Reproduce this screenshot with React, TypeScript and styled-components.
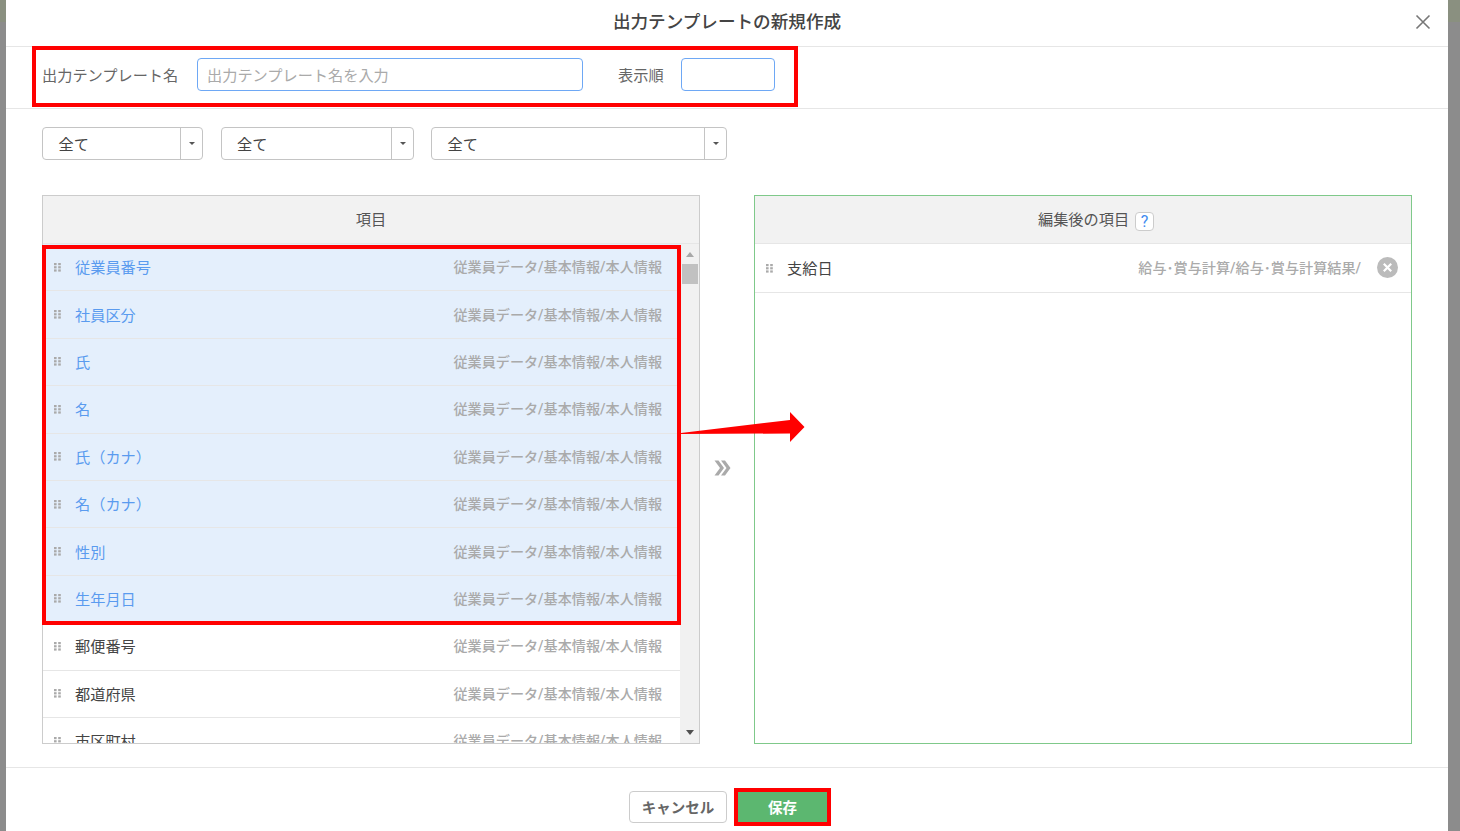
import styled, { createGlobalStyle } from 'styled-components'

const GlobalStyle = createGlobalStyle`
  html, body {
    margin: 0;
    padding: 0;
    height: 100%;
    overflow: hidden;
    font-family: Roboto, "Noto Sans CJK JP", "Noto Sans", sans-serif;
    color: #444;
  }
`

const leftItems = [
  { name: '従業員番号', selected: true },
  { name: '社員区分', selected: true },
  { name: '氏', selected: true },
  { name: '名', selected: true },
  { name: '氏（カナ）', selected: true },
  { name: '名（カナ）', selected: true },
  { name: '性別', selected: true },
  { name: '生年月日', selected: true },
  { name: '郵便番号', selected: false },
  { name: '都道府県', selected: false },
  { name: '市区町村', selected: false },
]

const Handle = () => (
  <HandleIcon width="7" height="9" viewBox="0 0 7 9">
    {[0, 3.2, 6.4].map((y) => (
      <g key={y}>
        <rect x="0" y={y} width="2.6" height="2.2" />
        <rect x="4.2" y={y} width="2.6" height="2.2" />
      </g>
    ))}
  </HandleIcon>
)

const Select = ({ width }: { width: number }) => (
  <SelectBox $width={width}>
    <SelectValue>全て</SelectValue>
    <SelectCaret />
  </SelectBox>
)

export default function App() {
  return (
    <Page>
      <GlobalStyle />
      <Modal>
        <Header>
          <Title>出力テンプレートの新規作成</Title>
          <CloseButton width="16" height="16" viewBox="0 0 16 16">
            <path d="M1.5 1.5 L14.5 14.5 M14.5 1.5 L1.5 14.5" />
          </CloseButton>
        </Header>

        <FormRow>
          <FieldLabel>出力テンプレート名</FieldLabel>
          <NameInput placeholder="出力テンプレート名を入力" />
          <OrderLabel>表示順</OrderLabel>
          <OrderInput />
        </FormRow>

        <Body>
          <Filters>
            <Select width={161} />
            <Select width={193} />
            <Select width={296} />
          </Filters>

          <Columns>
            <LeftPanel>
              <PanelHeader>項目</PanelHeader>
              <PanelBody>
                <List>
                  {leftItems.map((item) => (
                    <Row key={item.name} $selected={item.selected}>
                      <Handle />
                      <RowName $selected={item.selected}>{item.name}</RowName>
                      <RowSource>従業員データ/基本情報/本人情報</RowSource>
                    </Row>
                  ))}
                </List>
                <Scrollbar>
                  <ScrollUp />
                  <ScrollThumb />
                  <ScrollDown />
                </Scrollbar>
              </PanelBody>
            </LeftPanel>

            <Transfer>
              <svg width="17" height="16" viewBox="0 0 17 16" fill="#aaa">
                <path d="M0.5 0.5 H4.5 L10 8 L4.5 15.5 H0.5 L6 8 Z" />
                <path d="M7 0.5 H11 L16.5 8 L11 15.5 H7 L12.5 8 Z" />
              </svg>
            </Transfer>

            <RightPanel>
              <RightHeader>
                編集後の項目
                <HelpBadge>?</HelpBadge>
              </RightHeader>
              <RightRow>
                <Handle />
                <RowName>支給日</RowName>
                <RightSource>給与･賞与計算/給与･賞与計算結果/</RightSource>
                <RemoveIcon width="21" height="21" viewBox="0 0 21 21">
                  <circle cx="10.5" cy="10.5" r="10.5" fill="#bbb" />
                  <path d="M6.8 6.8 L14.2 14.2 M14.2 6.8 L6.8 14.2" stroke="#fff" strokeWidth="2.2" />
                </RemoveIcon>
              </RightRow>
            </RightPanel>
          </Columns>
        </Body>

        <Footer>
          <CancelButton>キャンセル</CancelButton>
          <SaveButton>保存</SaveButton>
        </Footer>
      </Modal>

      <FormHighlight />
      <ListHighlight />
      <SaveHighlight />
      <ArrowMark width="124" height="30" viewBox="0 0 124 30">
        <path d="M0 21 L109 8 V0 L123.5 15 L109 30 V21.5 L0 22 Z" fill="#ff0000" />
      </ArrowMark>
    </Page>
  )
}

const Page = styled.div`
  position: relative;
  width: 1460px;
  height: 831px;
  overflow: hidden;
  padding: 0 12px 0 6px;
  box-sizing: border-box;
  background: linear-gradient(#8a9080 0, #8a9080 22px, #8c8c8c 22px);
`

const Modal = styled.div`
  width: 1442px;
  height: 831px;
  background: #fff;
  display: flex;
  flex-direction: column;
`

const Header = styled.header`
  position: relative;
  height: 47px;
  flex: none;
  display: flex;
  align-items: center;
  justify-content: center;
  padding-bottom: 5px;
  box-sizing: border-box;
  border-bottom: 1px solid #e6e6e6;
`

const Title = styled.h1`
  margin: 0;
  font-size: 17.6px;
  font-weight: 500;
  color: #444;
`

const CloseButton = styled.svg`
  position: absolute;
  right: 17px;
  top: 14px;
  fill: none;
  stroke: #777;
  stroke-width: 1.6;
`

const FormRow = styled.div`
  height: 62px;
  flex: none;
  box-sizing: border-box;
  display: flex;
  align-items: center;
  padding: 0 0 7px 36px;
  border-bottom: 1px solid #e6e6e6;
`

const FieldLabel = styled.label`
  width: 155px;
  flex: none;
  font-size: 15.2px;
  color: #666;
`

const OrderLabel = styled(FieldLabel)`
  width: 63px;
  margin-left: 35px;
`

const NameInput = styled.input`
  width: 386px;
  height: 33px;
  box-sizing: border-box;
  border: 1px solid #6ea8f5;
  border-radius: 4px;
  padding: 3px 9px 0;
  font: inherit;
  font-size: 15.2px;
  outline: none;

  &::placeholder {
    color: #aaa;
  }
`

const OrderInput = styled(NameInput)`
  width: 94px;
`

const Body = styled.div`
  flex: 1;
  padding: 18px 36px 23px;
  display: flex;
  flex-direction: column;
`

const Filters = styled.div`
  display: flex;
  gap: 17.5px;
  margin-bottom: 35px;
`

const SelectBox = styled.div<{ $width: number }>`
  width: ${(p) => p.$width}px;
  height: 33px;
  box-sizing: border-box;
  display: flex;
  border: 1px solid #c4c4c4;
  border-radius: 4px;
  background: #fff;
`

const SelectValue = styled.span`
  flex: 1;
  padding-left: 15.5px;
  font-size: 15.2px;
  line-height: 35px;
  color: #444;
`

const SelectCaret = styled.span`
  width: 21px;
  flex: none;
  border-left: 1px solid #c4c4c4;
  position: relative;

  &::after {
    content: '';
    position: absolute;
    left: 8px;
    top: 14px;
    border-left: 3px solid transparent;
    border-right: 3px solid transparent;
    border-top: 3px solid #555;
  }
`

const Columns = styled.div`
  height: 549px;
  display: grid;
  grid-template-columns: 658px 54px 658px;
`

const LeftPanel = styled.section`
  box-sizing: border-box;
  border: 1px solid #ccc;
  display: flex;
  flex-direction: column;
  min-height: 0;
`

const RightPanel = styled(LeftPanel)`
  border-color: #7fc98a;
`

const PanelHeader = styled.div`
  height: 48px;
  flex: none;
  box-sizing: border-box;
  background: #f2f2f2;
  border-bottom: 1px solid #e6e6e6;
  display: flex;
  align-items: center;
  justify-content: center;
  padding-bottom: 3px;
  font-size: 15.2px;
  color: #555;
`

const RightHeader = styled(PanelHeader)`
  padding-left: 26px;
`

const HelpBadge = styled.span`
  width: 19px;
  height: 19px;
  margin: 7px 0 0 6px;
  box-sizing: border-box;
  border: 1px solid #ccc;
  border-radius: 4px;
  background: #fff;
  color: #3f8cf0;
  font-size: 16px;
  line-height: 18px;
  text-align: center;
`

const PanelBody = styled.div`
  flex: 1;
  min-height: 0;
  display: flex;
`

const List = styled.div`
  flex: 1;
  min-width: 0;
  overflow: hidden;
`

const Row = styled.div<{ $selected?: boolean }>`
  height: 47.4px;
  box-sizing: border-box;
  display: flex;
  align-items: center;
  padding: 0 18px 2px 11px;
  border-bottom: 1px solid #e6e6e6;
  background: ${(p) => (p.$selected ? '#e4effc' : '#fff')};
`

const HandleIcon = styled.svg`
  flex: none;
  fill: #aaa;
  margin-top: 2px;
`

const RowName = styled.span<{ $selected?: boolean }>`
  margin-left: 14px;
  font-size: 15.2px;
  color: ${(p) => (p.$selected ? '#5a9bef' : '#444')};
`

const RowSource = styled.span`
  margin-left: auto;
  font-size: 14.12px;
  font-weight: 500;
  color: #aaa;
`

const Scrollbar = styled.div`
  width: 19px;
  flex: none;
  background: #f1f1f1;
  display: flex;
  flex-direction: column;
  align-items: center;
`

const ScrollUp = styled.span`
  margin: 8px 0 7px;
  border-left: 4px solid transparent;
  border-right: 4px solid transparent;
  border-bottom: 5px solid #a8a8a8;
`

const ScrollThumb = styled.span`
  width: 16px;
  height: 20px;
  background: #c1c1c1;
`

const ScrollDown = styled.span`
  margin: auto 0 8px;
  border-left: 4px solid transparent;
  border-right: 4px solid transparent;
  border-top: 5px solid #505050;
`

const Transfer = styled.div`
  display: flex;
  justify-content: center;
  align-items: center;
  padding-right: 10px;
  margin-top: -3px;
`

const RightRow = styled.div`
  height: 49px;
  flex: none;
  box-sizing: border-box;
  display: flex;
  align-items: center;
  padding: 0 13px 2px 11px;
  border-bottom: 1px solid #e6e6e6;
`

const RightSource = styled(RowSource)`
  margin-right: 16px;
`

const RemoveIcon = styled.svg`
  flex: none;
`

const Footer = styled.footer`
  flex: none;
  height: 64px;
  box-sizing: border-box;
  border-top: 1px solid #e6e6e6;
  display: flex;
  justify-content: center;
  align-items: flex-start;
  gap: 11px;
  padding: 23px 0 0 2px;
`

const CancelButton = styled.button`
  width: 98px;
  height: 32px;
  box-sizing: border-box;
  border: 1px solid #ccc;
  border-radius: 4px;
  background: #fff;
  color: #666;
  font: inherit;
  font-size: 14.5px;
  font-weight: 700;
  padding: 0 0 2px;
`

const SaveButton = styled(CancelButton)`
  width: 89px;
  border: none;
  border-radius: 0;
  background: #5cb770;
  color: #fff;
`

const FormHighlight = styled.div`
  position: absolute;
  left: 32px;
  top: 46px;
  width: 766px;
  height: 61px;
  box-sizing: border-box;
  border: 4px solid #ff0000;
`

const ListHighlight = styled.div`
  position: absolute;
  left: 42px;
  top: 245px;
  width: 639px;
  height: 380px;
  box-sizing: border-box;
  border: 4px solid #ff0000;
`

const SaveHighlight = styled.div`
  position: absolute;
  left: 734px;
  top: 788px;
  width: 97px;
  height: 38px;
  box-sizing: border-box;
  border: 4px solid #ff0000;
`

const ArrowMark = styled.svg`
  position: absolute;
  left: 681px;
  top: 412px;
`
